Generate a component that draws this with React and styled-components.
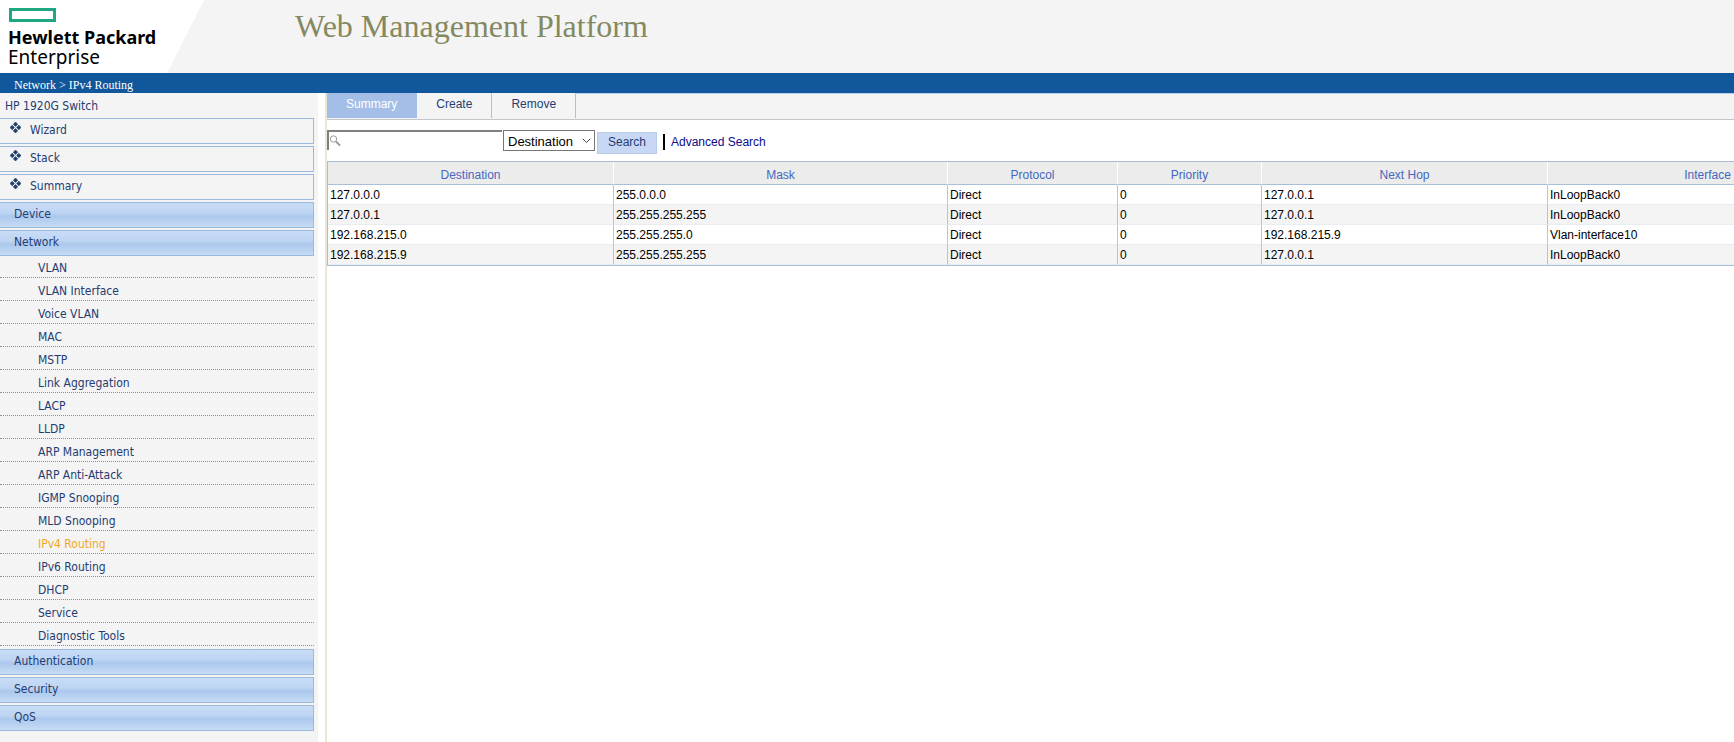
import React, { useState } from 'react'
import styled, { createGlobalStyle } from 'styled-components'

const GlobalStyle = createGlobalStyle`
    body {
        margin: 0;
        background: white;
        font: 12px "Liberation Sans", Arial, sans-serif;
    }

    * {
        box-sizing: border-box;
    }
`

const links = ['Wizard', 'Stack', 'Summary']

const networkItems = [
    'VLAN', 'VLAN Interface', 'Voice VLAN', 'MAC', 'MSTP', 'Link Aggregation',
    'LACP', 'LLDP', 'ARP Management', 'ARP Anti-Attack', 'IGMP Snooping',
    'MLD Snooping', 'IPv4 Routing', 'IPv6 Routing', 'DHCP', 'Service', 'Diagnostic Tools'
]

const groups = [
    { name: 'Device' },
    { name: 'Network', items: networkItems },
    { name: 'Authentication' },
    { name: 'Security' },
    { name: 'QoS' }
]

const tabs = [
    { name: 'Summary', active: true },
    { name: 'Create' },
    { name: 'Remove' }
]

const columns = [
    { name: 'Destination', width: 286 },
    { name: 'Mask', width: 334 },
    { name: 'Protocol', width: 170 },
    { name: 'Priority', width: 144 },
    { name: 'Next Hop', width: 286 },
    { name: 'Interface', width: 320 }
]

const routes = [
    ['127.0.0.0', '255.0.0.0', 'Direct', '0', '127.0.0.1', 'InLoopBack0'],
    ['127.0.0.1', '255.255.255.255', 'Direct', '0', '127.0.0.1', 'InLoopBack0'],
    ['192.168.215.0', '255.255.255.0', 'Direct', '0', '192.168.215.9', 'Vlan-interface10'],
    ['192.168.215.9', '255.255.255.255', 'Direct', '0', '127.0.0.1', 'InLoopBack0']
]

const Page = styled.div`
    display: flex;
    flex-direction: column;
    min-height: 100vh;
    overflow: hidden;
`

const Header = styled.header`
    display: flex;
    height: 73px;
    background: #f4f4f4;
`

const Logo = styled.div`
    width: 204px;
    margin-right: 91px;
    padding: 8px 0 0 8px;
    background: white;
    clip-path: polygon(0 0, 100% 0, 82% 100%, 0 100%);
    color: black;
    font: 19px/20px "Noto Sans", sans-serif;

    svg {
        display: block;
        margin: 0 0 5px 1px;
    }

    strong, span {
        display: block;
        white-space: nowrap;
    }

    strong {
        font-size: 18px;
    }
`

const Title = styled.h1`
    margin: 0;
    padding-top: 8px;
    color: #85895f;
    font: 32px/36px "Liberation Serif", "Times New Roman", serif;
`

const Breadcrumb = styled.nav`
    height: 20px;
    padding: 5px 14px 0;
    background: #10579b;
    color: white;
    font: 12px/15px "Liberation Serif", "Times New Roman", serif;
`

const Body = styled.div`
    display: flex;
    flex: 1;
`

const Sidebar = styled.nav`
    flex: none;
    width: 318px;
    padding-right: 4px;
    background: #f4f4f4;
    color: #253c72;
    font: 12px "DejaVu Sans Condensed", Tahoma, sans-serif;

    ul {
        margin: 0;
        padding: 0;
        list-style: none;
    }
`

const DeviceName = styled.div`
    height: 25px;
    padding-left: 5px;
    line-height: 26px;
`

const MenuLink = styled.a`
    display: flex;
    height: 26px;
    margin-bottom: 2px;
    padding-left: 10px;
    border: 1px solid #9bb9dc;
    border-left: 0;
    line-height: 22px;
    color: inherit;
    text-decoration: none;

    svg {
        margin: 3px 9px 0 0;
    }
`

const MenuGroup = styled.button`
    display: block;
    width: 100%;
    height: 26px;
    margin-bottom: ${props => props.$open ? 0 : 2}px;
    padding: 0 14px 2px;
    border: 1px solid #9bb9dc;
    border-left: 0;
    background: linear-gradient(#c8dcf6 0%, #bed5f3 40%, #abc8ed 55%, #c7dcf5 100%);
    color: inherit;
    font: inherit;
    text-align: left;
`

const SubMenu = styled.ul`
    && {
        margin-bottom: 3px;
    }
`

const SubLink = styled.a`
    display: block;
    height: 23px;
    padding-left: 38px;
    border-bottom: 1px dotted #8f8f8f;
    line-height: 26px;
    color: ${props => props.$active ? '#f0a818' : 'inherit'};
    text-decoration: none;

    li:first-child > & {
        height: 22px;
        line-height: 24px;
    }
`

const Main = styled.main`
    flex: 1;
    min-width: 0;
    margin-left: 7px;
    border-left: 2px solid #e9e6d6;
`

const Tabs = styled.div`
    display: flex;
    height: 27px;
    padding-bottom: 1px;
    border-bottom: 1px solid #c3c6ca;
    background: #f4f4f4;

    &::after {
        content: '';
        flex: 1;
        border-top: 1px solid #b5cdec;
    }
`

const Tab = styled.button`
    padding: 0 19px 4px;
    border: 0;
    border-right: 1px solid ${props => props.$active ? '#a3bfe8' : '#b9c0c6'};
    background: ${props => props.$active ? '#a3bfe8' : 'transparent'};
    color: ${props => props.$active ? 'white' : '#253c72'};
    font: inherit;
`

const SearchForm = styled.form`
    display: flex;
    align-items: flex-start;
    height: 41px;
    padding-top: 10px;
`

const SearchBox = styled.label`
    display: flex;
    align-items: center;
    width: 175px;
    height: 20px;
    margin-right: 1px;
    border: solid #808080;
    border-width: 2px 0 0 2px;

    svg {
        flex: none;
    }

    input {
        flex: 1;
        min-width: 0;
        padding: 0 2px;
        border: 0;
        outline: 0;
        font: inherit;
    }
`

const SelectWrap = styled.div`
    display: grid;
    align-items: center;
    width: 92px;
    margin-right: 2px;

    select, svg {
        grid-area: 1 / 1;
    }

    select {
        height: 21px;
        padding: 1px 4px 0;
        border: 1px solid #767676;
        border-radius: 0;
        background: white;
        color: black;
        font: inherit;
        font-size: 13px;
        appearance: none;
    }

    svg {
        justify-self: end;
        margin-right: 4px;
        pointer-events: none;
    }
`

const SearchButton = styled.button`
    width: 60px;
    height: 22px;
    margin: 2px 6px 0 0;
    padding: 0 0 2px;
    border: 1px solid #b8cdec;
    background: #c8d8f4;
    color: #253c72;
    font: inherit;
`

const Advanced = styled.a`
    margin-top: 4px;
    padding-left: 6px;
    border-left: 2px solid black;
    line-height: 16px;
    color: #0b0b8c;
    text-decoration: none;
`

const Table = styled.table`
    width: 1541px;
    border-collapse: separate;
    border-spacing: 0;
    border: solid #a9bfd8;
    border-width: 1px 0 1px 1px;
    table-layout: fixed;

    th {
        height: 23px;
        padding: 3px 0 0;
        border-right: 1px solid white;
        border-bottom: 1px solid #a9bfd8;
        background: #ececec;
        color: #4468be;
        font-weight: normal;
    }

    td {
        height: 20px;
        padding: 1px 2px 0;
        border-right: 1px solid #b9c4d2;
        border-bottom: 1px solid #e9edf1;
    }

    tbody tr:nth-child(even) {
        background: #f4f4f4;
    }
`

const HpeMark = () => (
    <svg width="47" height="14" viewBox="0 0 47 14" aria-hidden="true">
        <rect x="1.5" y="1.5" width="44" height="11" fill="none" stroke="#1da783" strokeWidth="3" />
    </svg>
)

const Diamonds = () => (
    <svg width="11" height="11" viewBox="0 0 10 10" fill="#1f3f6b" aria-hidden="true">
        <path d="M5 0l2 2-2 2-2-2zM8 3l2 2-2 2-2-2zM5 6l2 2-2 2-2-2zM2 3l2 2-2 2-2-2z" stroke="#1f3f6b" strokeWidth=".6" />
    </svg>
)

const Magnifier = () => (
    <svg width="12" height="14" viewBox="0 0 12 14" fill="none" stroke="#9a9a9a" aria-hidden="true">
        <circle cx="4.5" cy="5" r="3.2" />
        <path d="M7 7.5l4 4" strokeWidth="1.8" />
    </svg>
)

const Chevron = () => (
    <svg width="9" height="6" viewBox="0 0 9 6" fill="none" stroke="#444" aria-hidden="true">
        <path d="M.8 .8l3.7 3.7L8.2 .8" />
    </svg>
)

const Menu = () => (
    <Sidebar>
        <DeviceName>HP 1920G Switch</DeviceName>
        {links.map(name => (
            <MenuLink href="#" key={name}>
                <Diamonds />
                {name}
            </MenuLink>
        ))}
        {groups.map(group => (
            <React.Fragment key={group.name}>
                <MenuGroup type="button" $open={!!group.items}>{group.name}</MenuGroup>
                {group.items && (
                    <SubMenu>
                        {group.items.map(item => (
                            <li key={item}>
                                <SubLink href="#" $active={item === 'IPv4 Routing'}>{item}</SubLink>
                            </li>
                        ))}
                    </SubMenu>
                )}
            </React.Fragment>
        ))}
    </Sidebar>
)

const Search = () => {
    const [query, setQuery] = useState('')

    return (
        <SearchForm onSubmit={e => e.preventDefault()}>
            <SearchBox>
                <Magnifier />
                <input aria-label="Search text" value={query} onChange={e => setQuery(e.target.value)} />
            </SearchBox>
            <SelectWrap>
                <select aria-label="Search field">
                    {columns.map(({ name }) => <option key={name}>{name}</option>)}
                </select>
                <Chevron />
            </SelectWrap>
            <SearchButton type="submit">Search</SearchButton>
            <Advanced href="#">Advanced Search</Advanced>
        </SearchForm>
    )
}

const RouteTable = () => (
    <Table>
        <colgroup>
            {columns.map(({ name, width }) => <col key={name} width={width} />)}
        </colgroup>
        <thead>
            <tr>
                {columns.map(({ name }) => <th key={name}>{name}</th>)}
            </tr>
        </thead>
        <tbody>
            {routes.map(route => (
                <tr key={route[0]}>
                    {route.map((value, i) => <td key={columns[i].name}>{value}</td>)}
                </tr>
            ))}
        </tbody>
    </Table>
)

const App = () => (
    <Page>
        <GlobalStyle />
        <Header>
            <Logo>
                <HpeMark />
                <strong>Hewlett Packard</strong>
                <span>Enterprise</span>
            </Logo>
            <Title>Web Management Platform</Title>
        </Header>
        <Breadcrumb>Network &gt; IPv4 Routing</Breadcrumb>
        <Body>
            <Menu />
            <Main>
                <Tabs>
                    {tabs.map(({ name, active }) => (
                        <Tab type="button" key={name} $active={active}>{name}</Tab>
                    ))}
                </Tabs>
                <Search />
                <RouteTable />
            </Main>
        </Body>
    </Page>
)

export default App
